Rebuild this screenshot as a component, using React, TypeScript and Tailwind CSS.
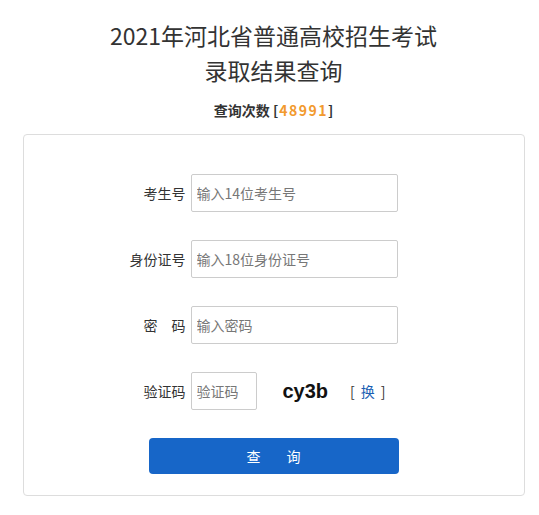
import React from "react";

const font = { fontFamily: '"Noto Sans CJK SC", "Noto Sans", sans-serif' };

function Row({ label, placeholder }: { label: string; placeholder: string }) {
  return (
    <div className="flex h-[38px] items-center">
      <div className="w-[70px] mr-[5px] text-right text-[14px] text-[#333]">{label}</div>
      <input
        className="h-[38px] w-[207px] border border-[#ccc] rounded-[2px] pl-[5px] text-[14px] text-[#333] placeholder:text-[#777] outline-none bg-white"
        placeholder={placeholder}
      />
    </div>
  );
}

export default function App() {
  return (
    <div className="w-full min-h-[515px] bg-white pl-[8px] text-[#333]" style={font}>
      <h1 className="pt-[18px] text-center text-[23px] leading-[35px] font-normal text-[#333]">
        2021年河北省普通高校招生考试
        <br />
        录取结果查询
      </h1>
      <p className="mt-[12px] text-center text-[14px] leading-[20px] font-bold text-[#333]">
        查询次数 <span className="tracking-[1px]">[</span>
        <span className="text-[#f29a2e] tracking-[1.5px]">48991</span>]
      </p>
      <div className="mx-auto mt-[14px] w-[502px] h-[362px] border border-[#ddd] rounded-[4px] pt-[39px]">
        <div className="pl-[92px] flex flex-col gap-[28px]">
          <Row label="考生号" placeholder="输入14位考生号" />
          <Row label="身份证号" placeholder="输入18位身份证号" />
          <Row label="密　码" placeholder="输入密码" />
          <div className="flex h-[38px] items-center">
            <div className="w-[70px] mr-[5px] text-right text-[14px] text-[#333]">验证码</div>
            <input
              className="h-[38px] w-[66px] border border-[#ccc] rounded-[2px] pl-[5px] text-[14px] placeholder:text-[#777] outline-none bg-white"
              placeholder="验证码"
            />
            <span
              className="ml-[26px] text-[20px] font-bold text-[#111] leading-none"
              style={{ fontFamily: '"Liberation Sans", Arial, sans-serif' }}
            >
              cy3b
            </span>
            <span className="ml-[22px] flex items-center gap-[6px] text-[14px] text-[#333]">
              <span>[</span>
              <span className="text-[#1a5fb4]">换</span>
              <span>]</span>
            </span>
          </div>
        </div>
        <button className="mt-[28px] ml-[125px] w-[250px] h-[36px] rounded-[4px] bg-[#1766c8] text-white text-[14px] flex items-center justify-center gap-[26px]">
          <span>查</span>
          <span>询</span>
        </button>
      </div>
    </div>
  );
}
